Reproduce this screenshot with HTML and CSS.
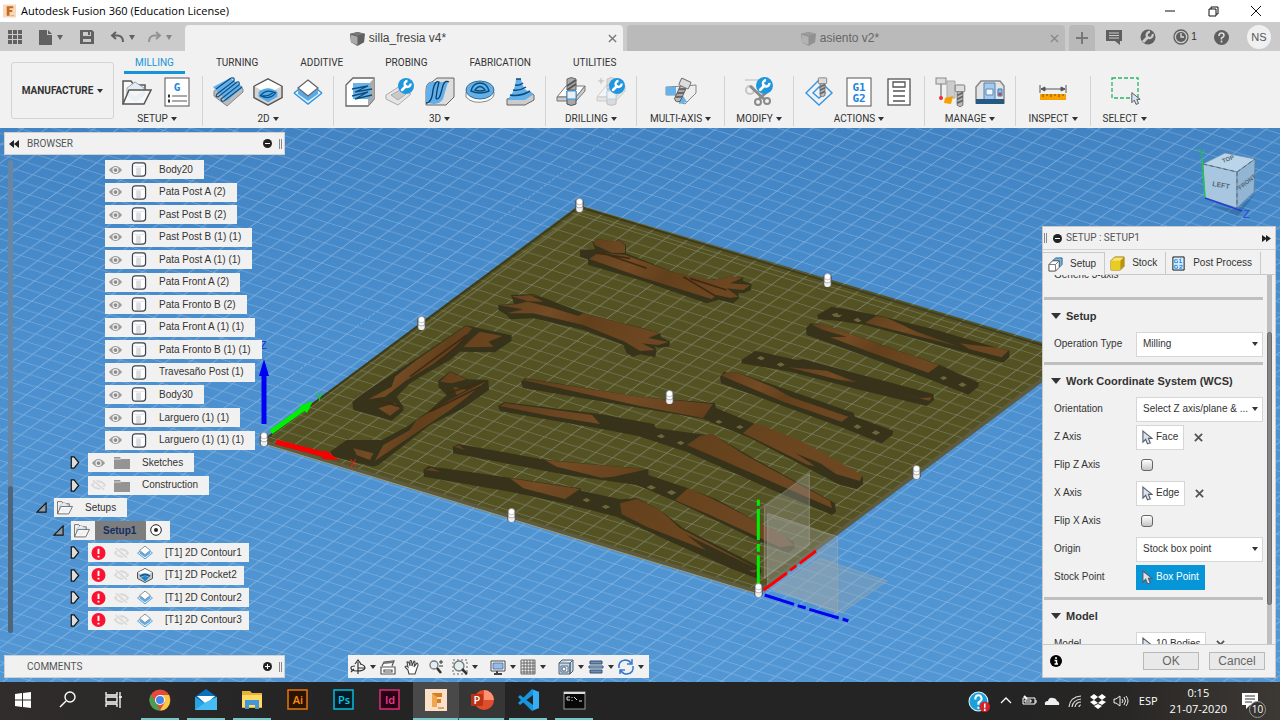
FILE: index.html
```html
<!DOCTYPE html>
<html lang="en">
<head>
<meta charset="utf-8">
<title>Autodesk Fusion 360 (Education License)</title>
<link rel="stylesheet" href="styles.css">
</head>
<body>
<svg class="defs" aria-hidden="true">
  <symbol id="eye" viewBox="0 0 16 12"><path d="M1 6Q8-2.500 15 6Q8 14.500 1 6Z" fill="#9b9b9b"/><circle cx="8" cy="6" r="3.300" fill="#f1f1f1"/><circle cx="8" cy="6" r="2" fill="#8d8d8d"/></symbol>
  <symbol id="eye-off" viewBox="0 0 16 12"><path d="M1 6Q8-2 15 6Q8 14 1 6Z" fill="none" stroke="#d9d9d9" stroke-width="2"/><circle cx="8" cy="6" r="2" fill="#d9d9d9"/><path d="M2 1L14 11" stroke="#f1f1f1" stroke-width="3"/><path d="M2 1L14 11" stroke="#d4d4d4" stroke-width="1.300"/></symbol>
  <symbol id="body" viewBox="0 0 16 16"><path d="M1 4Q1 1 4 1H12Q15 1 15 4V12Q15 15 12 15H4Q1 15 1 12Z" fill="#fff" stroke="#3c434b" stroke-width="1.300"/><path d="M1.500 4Q8 6.500 14.500 4" fill="none" stroke="#d5d8dc" stroke-width=".8"/><path d="M5 6H10V14H5Z" fill="#cfd3d8" opacity=".8"/></symbol>
  <symbol id="folder" viewBox="0 0 16 13"><path d="M0 1H6L7 3H16V13H0Z" fill="#949494"/><path d="M0 3H7" stroke="#f1f1f1" stroke-width=".8"/></symbol>
  <symbol id="setup-folder" viewBox="0 0 30 28"><path d="M1 26V3H9L12 7H23V12" fill="#f7f7f7" stroke="#555" stroke-width="1.500"/><path d="M13 4L22 10V17L13 23L5 17V10Z" fill="#e3edf6" stroke="#8b9197" stroke-width=".8"/><path d="M5 13L13 18L22 13V17L13 23L5 17Z" fill="#a9d0ee"/><path d="M1 26L7 12H29L22 26Z" fill="#f8f8f8" fill-opacity=".82" stroke="#555" stroke-width="1.500"/></symbol>
  <symbol id="contour" viewBox="0 0 30 28"><path d="M1 15L15 26L29 15" fill="none" stroke="#2f96e4" stroke-width="1.500"/><path d="M1 15L6 11M29 15L24 11" stroke="#2f96e4" stroke-width="1.500"/><path d="M5 11L15 18L25 11V16L15 23L5 16Z" fill="#58abea"/><path d="M15 2L25 10L15 18L5 10Z" fill="#fff" stroke="#666" stroke-width="1.300"/></symbol>
  <symbol id="pocket" viewBox="0 0 32 30"><path d="M16 1L31 9V21L16 29L1 21V9Z" fill="#d4d4d4" stroke="#555" stroke-width="1.500"/><path d="M16 2L30 9L16 17L2 9Z" fill="#fff"/><path d="M6 15Q16 7 26 15V20L16 26L6 20Z" fill="#57a9e8"/><path d="M8 19Q14 11 24 16Q18 24 8 19ZM10 19Q16 20 21 16" fill="none" stroke="#0b5084" stroke-width="1.400"/></symbol>
  <symbol id="pocket-small" viewBox="0 0 32 30"><path d="M16 1L31 9V21L16 29L1 21V9Z" fill="#c4c8cb" stroke="#555" stroke-width="2"/><path d="M16 2L30 9L24 12Q16 8 8 12L2 9Z" fill="#fff"/><path d="M5 15Q16 7 27 15L25 18Q16 12 7 18Z" fill="#135f98"/><path d="M8 19Q16 13 24 19L16 27Z" fill="#1f83ca"/></symbol>
  <symbol id="wrench" viewBox="0 0 16 16"><circle cx="8" cy="8" r="8" fill="#2097dd"/><path d="M4 12L8 8" stroke="#fff" stroke-width="2.500" stroke-linecap="round"/><path d="M12.500 5.500A3 3 0 1 1 9.500 3" fill="none" stroke="#fff" stroke-width="2.300"/></symbol>
  <symbol id="error" viewBox="0 0 16 16"><circle cx="8" cy="8" r="8" fill="#fa1230"/><path d="M8 3V9M8 11V13" stroke="#fff" stroke-width="2.200"/></symbol>
  <symbol id="closed" viewBox="0 0 10 14"><path d="M1 1L4 1L9 7L4 13L1 13Z" fill="#ddd" stroke="#151515" stroke-width="1.300"/></symbol>
  <symbol id="open" viewBox="0 0 12 12"><path d="M1 11L11 1V11Z" fill="#8e9aa4" stroke="#151515" stroke-width="1.300"/></symbol>
  <symbol id="cursor" viewBox="0 0 12 16"><path d="M1 1V13L4 10L6 15L9 14L7 9H11Z" fill="#dde3ec" stroke="#555d68" stroke-width="1.200"/></symbol>
  <symbol id="cube" viewBox="0 0 16 16"><path d="M0 3L8 1L16 3L15 12L8 16L1 12Z" fill="#606060"/><path d="M1 4L8 6V15L1 12Z" fill="#aaa"/><path d="M1 3L8 1L15 3L8 5Z" fill="#777"/></symbol>
  <symbol id="handle" viewBox="0 0 10 14"><rect x="1" y="1" width="8" height="12" rx="3" fill="#555"/><rect x="2" y="7" width="6" height="6" rx="2" fill="#eee"/><rect x="2" y="4" width="6" height="5" rx="2" fill="#fff" stroke="#777" stroke-width=".5"/><circle cx="5" cy="3.500" r="3" fill="#fff" stroke="#888" stroke-width=".5"/></symbol>
  <symbol id="drill" viewBox="0 0 30 30"><path d="M1 20L10 9H29L20 20Z" fill="#fff" stroke="#777"/><path d="M1 20V24H20L29 14V9L20 20Z" fill="#ccc" stroke="#777"/><path d="M11 2Q15-1 20 2V13H11Z" fill="#aaa" stroke="#666"/><path d="M11 9L20 3M11 13L20 7M11 27L20 21" stroke="#555" stroke-width="2"/><path d="M11 14H20V27Q15 30 11 27Z" fill="#a7a7a7" stroke="#555"/><path d="M11 14H20V22H11Z" fill="#eee" stroke="#2296ed"/></symbol>
  <symbol id="bolt" viewBox="0 0 12 24"><path d="M3 7H9V22L6 24L3 22Z" fill="#bbb" stroke="#555" stroke-width=".8"/><path d="M3 12L9 9M3 16L9 13M3 20L9 17" stroke="#666" stroke-width="2"/><rect x="1" y="1" width="10" height="7" rx="1" fill="#ddd" stroke="#777"/></symbol>
</svg>

<header class="titlebar">
  <svg class="logo" viewBox="0 0 14 14"><rect width="14" height="14" fill="#f7d9bd"/><path d="M4 2H11V4H7V6H10V8H7V12H4Z" fill="#c66a1d"/><path d="M8 12H12" stroke="#e9a060"/></svg>
  <h1>Autodesk Fusion 360 (Education License)</h1>
  <div class="window-buttons">
    <button aria-label="Minimize"><svg viewBox="0 0 12 12"><path d="M1 6H11" stroke="#111" fill="none"/></svg></button>
    <button aria-label="Restore"><svg viewBox="0 0 12 12"><path d="M2 4H9V11H2ZM4 4V2H11V9H9" stroke="#111" fill="none"/></svg></button>
    <button aria-label="Close"><svg viewBox="0 0 12 12"><path d="M1 1L11 11M11 1L1 11" stroke="#111" fill="none"/></svg></button>
  </div>
</header>

<div class="tabbar">
  <div class="quick">
    <button aria-label="Data panel"><svg width="14" height="14" viewBox="0 0 14 14"><path d="M0 2H14M0 7H14M0 12H14" stroke="#616161" stroke-width="4" stroke-dasharray="4 1"/></svg></button>
    <button class="has-caret" aria-label="File"><svg width="13" height="15" viewBox="0 0 13 15"><path d="M0 0H8V5H13V15H0ZM9 0L13 4H9Z" fill="#616161"/></svg></button>
    <button aria-label="Save"><svg width="14" height="14" viewBox="0 0 14 14"><path d="M0 0H12L14 2V14H0ZM3 2V6H11V2ZM3 9V12H11V9Z" fill="#616161" fill-rule="evenodd"/><path d="M8 2H10V5H8Z" fill="#616161"/></svg></button>
    <button class="has-caret" aria-label="Undo"><svg width="13" height="12" viewBox="0 0 13 12"><path d="M5 1L1 4.500L5 8M1 4.500H7Q12 5 12 11" fill="none" stroke="#616161" stroke-width="2"/></svg></button>
    <button class="has-caret faded" aria-label="Redo"><svg width="13" height="12" viewBox="0 0 13 12"><path d="M8 1L12 4.500L8 8M12 4.500H6Q1 5 1 11" fill="none" stroke="#777" stroke-width="2"/></svg></button>
  </div>
  <div class="doc doc-active"><svg class="cube"><use href="#cube"/></svg><span>silla_fresia v4*</span><button aria-label="Close silla_fresia"><svg viewBox="0 0 10 10"><path d="M1 1L9 9M9 1L1 9" stroke="#777" stroke-width="1.500"/></svg></button></div>
  <div class="doc"><svg class="cube"><use href="#cube"/></svg><span>asiento v2*</span><button aria-label="Close asiento"><svg viewBox="0 0 10 10"><path d="M1 1L9 9M9 1L1 9" stroke="#888" stroke-width="1.500"/></svg></button></div>
  <button class="new-tab" aria-label="New tab"><svg width="12" height="12" viewBox="0 0 12 12"><path d="M6 0V12M0 6H12" stroke="#777" stroke-width="2"/></svg></button>
  <div class="account">
    <button aria-label="Comments"><svg width="16" height="15" viewBox="0 0 16 15"><path d="M0 0H16V11H14V15L9 11H0Z" fill="#5f5f5f"/><path d="M3 3H13M3 5.500H13M3 8H13" stroke="#ccc"/></svg></button>
    <button aria-label="Extensions"><svg width="16" height="16" viewBox="0 0 16 16"><circle cx="8" cy="8" r="7.500" fill="#5f5f5f"/><path d="M3 13L8 8" stroke="#ccc" stroke-width="3"/><path d="M12.500 5A3 3 0 1 1 10 3" fill="none" stroke="#ccc" stroke-width="2.300"/></svg></button>
    <button class="jobs" aria-label="Job status"><svg width="16" height="16" viewBox="0 0 16 16"><circle cx="8" cy="8" r="7" fill="none" stroke="#5f5f5f" stroke-width="1.300"/><circle cx="8" cy="8" r="5" fill="#5f5f5f"/><path d="M8 4V8H11" fill="none" stroke="#ddd" stroke-width="1.300"/></svg><span>1</span></button>
    <button aria-label="Help"><svg width="15" height="15" viewBox="0 0 15 15"><circle cx="7.500" cy="7.500" r="7.500" fill="#5f5f5f"/><path d="M5 6Q5 3 7.500 3Q10 3 10 5.500Q10 7 7.500 8V9.500M7.500 10.500V12.500" fill="none" stroke="#ddd" stroke-width="1.600"/></svg></button>
    <button class="avatar">NS</button>
  </div>
</div>

<section class="ribbon">
  <button class="workspace">MANUFACTURE <i class="caret"></i></button>
  <div class="ribbon-main">
    <nav class="ribbon-tabs">
      <button class="current">MILLING</button><button>TURNING</button><button>ADDITIVE</button><button>PROBING</button><button>FABRICATION</button><button>UTILITIES</button>
    </nav>
    <div class="groups">
      <div class="group g-setup"><div class="tools">
        <button aria-label="New setup"><svg><use href="#setup-folder"/></svg></button>
        <button aria-label="NC program"><svg viewBox="0 0 30 30"><rect x="3" y="1" width="24" height="28" fill="#fff" stroke="#555"/><text x="15" y="14" class="code">G</text><path d="M10 19H25M10 24H25" stroke="#555"/><path d="M6 19H8M6 24H8" stroke="#333" stroke-width="3"/></svg></button>
      </div><button class="group-label">SETUP <i class="caret"></i></button></div>
      <div class="group g-three"><div class="tools">
        <button aria-label="Face"><svg viewBox="0 0 30 30"><path d="M1 19L14 29L30 15V12L17 2L1 14Z" fill="#bcbcbc" stroke="#888"/><path d="M0 10L17 1L30 10L14 24Z" fill="#65b0ea"/><path d="M3 12L18 1Q22 0 21 4L4 17Q2 20 5 20L24 5Q27 4 26 8L8 22Q8 25 11 24L29 10" fill="none" stroke="#094d80" stroke-width="1.200"/></svg></button>
        <button aria-label="2D pocket"><svg><use href="#pocket"/></svg></button>
        <button aria-label="2D contour"><svg><use href="#contour"/></svg></button>
      </div><button class="group-label">2D <i class="caret"></i></button></div>
      <div class="group g-five"><div class="tools">
        <button aria-label="Adaptive"><svg viewBox="0 0 30 30"><path d="M1 8L8 1H29V22L23 29H1Z" fill="#fff" stroke="#666" stroke-width="1.300"/><path d="M23 8L29 1V22L23 29Z" fill="#aaa"/><path d="M8 6H25V22H8Z" fill="#69b2ea"/><path d="M7 12L23 9L10 15L27 12M7 19L23 15L10 22L27 18" fill="none" stroke="#0b4d7e" stroke-width="1.300"/></svg></button>
        <button aria-label="Pocket"><svg viewBox="0 0 30 30"><path d="M1 18L15 9L26 17L13 28L1 22Z" fill="#e6e6e6" stroke="#aaa"/><path d="M6 18L15 13L21 17L13 23Z" fill="#c9c9c9" stroke="#aaa"/><use href="#wrench" x="13" y="1" width="16" height="16"/></svg></button>
        <button aria-label="Parallel"><svg viewBox="0 0 30 30"><path d="M1 27V14Q1 5 7 5L12 1H29V20L21 28H1Z" fill="#ddd" stroke="#666"/><path d="M1 25V13Q2 5 7 5H23L18 22Q13 30 1 25Z" fill="#63afe9"/><path d="M1 26Q7 26 8 13Q10 3 14 5Q12 12 11 21Q14 25 17 12Q19 2 24 5" fill="none" stroke="#083f6b" stroke-width="1.300"/></svg></button>
        <button aria-label="Contour"><svg viewBox="0 0 30 30"><path d="M1 15V20Q8 28 22 24Q30 21 29 15Z" fill="#fff" stroke="#888"/><ellipse cx="15" cy="13" rx="14" ry="9" fill="#63b0e8" stroke="#386b91"/><path d="M6 14Q8 6 15 6T24 14Q15 18 6 14ZM10 13Q15 6 20 13Q15 15 10 13Z" fill="none" stroke="#0c4c7d" stroke-width="1.400"/></svg></button>
        <button aria-label="Steep"><svg viewBox="0 0 30 30"><path d="M2 22L25 15L29 18V23L20 28H2Z" fill="#ccc" stroke="#666"/><path d="M11 2H16Q17 14 29 17L20 23H2Q10 16 11 2Z" fill="#61b0ea"/><path d="M11 2H16M10 8Q15 9 18 6M8 13Q15 14 21 10M5 18Q15 20 25 14" fill="none" stroke="#0b4b7c" stroke-width="1.500"/></svg></button>
      </div><button class="group-label">3D <i class="caret"></i></button></div>
      <div class="group g-two"><div class="tools">
        <button aria-label="Drill"><svg><use href="#drill"/></svg></button>
        <button aria-label="Hole recognition"><svg viewBox="0 0 30 30"><use href="#drill" width="30" height="30" opacity=".3"/><path d="M5 1V7M2 4H8" stroke="#bbb"/><use href="#wrench" x="13" y="1" width="16" height="16"/></svg></button>
      </div><button class="group-label">DRILLING <i class="caret"></i></button></div>
      <div class="group g-multi"><div class="tools">
        <button aria-label="Multi-axis"><svg viewBox="0 0 30 30"><path d="M0 10L19 9L30 8V16L19 27L13 25L10 18H0Z" fill="#eee" stroke="#888"/><path d="M0 10H10V18H0ZM14 14L21 25L13 27Z" fill="#65b3ee"/><g transform="rotate(25 15 15)"><use href="#bolt" x="8" y="1" width="14" height="25"/></g></svg></button>
      </div><button class="group-label">MULTI-AXIS <i class="caret"></i></button></div>
      <div class="group g-modify"><div class="tools">
        <button aria-label="Modify"><svg viewBox="0 0 30 30"><path d="M1 3H15" stroke="#bbb"/><circle cx="6" cy="13" r="4" fill="none" stroke="#c5c5c5" stroke-width="2"/><path d="M6 9L21 23M26 12L15 22" stroke="#8b8b8b" stroke-width="3"/><circle cx="14" cy="25" r="3" fill="none" stroke="#8b8b8b" stroke-width="2"/><circle cx="23" cy="24" r="3" fill="none" stroke="#8b8b8b" stroke-width="2"/><use href="#wrench" x="12" y="0" width="17" height="17"/></svg></button>
      </div><button class="group-label">MODIFY <i class="caret"></i></button></div>
      <div class="group g-three"><div class="tools">
        <button aria-label="Simulate"><svg viewBox="0 0 30 30"><path d="M15 3L28 16L15 28L2 16ZM15 10L21 16L15 21L9 16Z" fill="none" stroke="#3496e3" stroke-width="1.400"/><use href="#bolt" x="13" y="0" width="11" height="20"/></svg></button>
        <button aria-label="Post process"><svg viewBox="0 0 30 30"><rect x="3" y="1" width="24" height="28" fill="#fff" stroke="#555"/><text x="15" y="14" class="code">G1</text><text x="15" y="25" class="code">G2</text></svg></button>
        <button aria-label="Setup sheet"><svg viewBox="0 0 30 30"><rect x="4" y="2" width="22" height="26" fill="#fff" stroke="#555" stroke-width="1.300"/><path d="M9 5H21V10H9ZM9 14H21M9 19H21M9 24H21" fill="none" stroke="#555" stroke-width="1.300"/></svg></button>
      </div><button class="group-label">ACTIONS <i class="caret"></i></button></div>
      <div class="group g-two"><div class="tools">
        <button aria-label="Tool library"><svg viewBox="0 0 30 30"><path d="M6 6V20" stroke="#555"/><rect x="1" y="1" width="10" height="6" fill="#ddd" stroke="#888"/><circle cx="6" cy="21" r="2" fill="#f02a32"/><path d="M12 4H20V21H12Z" fill="#ccc" stroke="#aaa"/><path d="M10 21L18 19L16 27L9 26Z" fill="#f5a000"/><use href="#bolt" x="19" y="7" width="12" height="23"/></svg></button>
        <button aria-label="Machine library"><svg viewBox="0 0 30 30"><path d="M1 26V10L6 4H25L29 9V26Z" fill="#e4e4e4" stroke="#888" stroke-width="1.500"/><path d="M9 6H20V26H9Z" fill="#a5c9ef" stroke="#4e83b8"/><path d="M11 12H18V18H11Z" fill="#eef7ff" stroke="#6389ac"/><path d="M23 12H27V19H23Z" fill="#7fc0f7" stroke="#347cae"/><circle cx="25" cy="17" r="1.500" fill="#db3042"/><path d="M1 22H29V27H1Z" fill="#245981"/></svg></button>
      </div><button class="group-label">MANAGE <i class="caret"></i></button></div>
      <div class="group g-inspect"><div class="tools">
        <button aria-label="Measure"><svg viewBox="0 0 30 30"><path d="M2 8V16M28 8V16M3 12H27M3 12L7 10V14ZM27 12L23 10V14Z" fill="#555" stroke="#555"/><path d="M2 17H28V23H2Z" fill="#f8a100"/><path d="M5 17V20M9 17V19M13 17V20M17 17V19M21 17V20M25 17V19" stroke="#765007"/></svg></button>
      </div><button class="group-label">INSPECT <i class="caret"></i></button></div>
      <div class="group g-select"><div class="tools">
        <button aria-label="Select"><svg viewBox="0 0 30 30"><rect x="2" y="1" width="26" height="20" fill="none" stroke="#29b466" stroke-width="1.300" stroke-dasharray="4 2"/><use href="#cursor" x="21" y="13" width="10" height="17"/></svg></button>
      </div><button class="group-label">SELECT <i class="caret"></i></button></div>
    </div>
  </div>
</section>

<main class="viewport">
  <svg class="scene" viewBox="0 128 1280 554" preserveAspectRatio="xMidYMid slice" aria-hidden="true">
    <defs>
      <linearGradient id="sky" x1="0" y1="0" x2="0" y2="1"><stop offset="0" stop-color="#4284c3"/><stop offset=".4" stop-color="#4b8fce"/><stop offset="1" stop-color="#5297d4"/></linearGradient>
      <pattern id="grid" width="100" height="100" patternUnits="userSpaceOnUse" patternTransform="matrix(1.700 .520 1 -.750 264 441)">
        <path d="M0 5H100M0 15H100M0 25H100M0 35H100M0 45H100M0 55H100M0 65H100M0 75H100M0 85H100M0 95H100M5 0V100M15 0V100M25 0V100M35 0V100M45 0V100M55 0V100M65 0V100M75 0V100M85 0V100M95 0V100" stroke="#d5eaff" stroke-opacity=".36" stroke-width=".6"/>
      </pattern>
      <linearGradient id="wood" x1="0" y1="0" x2="1" y2=".3"><stop offset="0" stop-color="#61401d"/><stop offset=".35" stop-color="#734b25"/><stop offset=".6" stop-color="#63401c"/><stop offset="1" stop-color="#6d4721"/></linearGradient>
    </defs>
    <rect y="128" width="1280" height="554" fill="url(#sky)"/>
    <rect y="128" width="1280" height="554" fill="url(#grid)"/>
    <path d="M264 439L579 205L1074 352L1074 358L758 594L264 442Z" fill="#545223"/>
    <path d="M264 439L579 205L1074 352V358L758 594L264 442Z" fill="url(#grid)" opacity=".8"/>
    <path d="M264 440L579 207L1074 355" fill="none" stroke="#33341b" stroke-width="2" opacity=".75"/>
    <path d="M272 436L579 212L1060 355" fill="none" stroke="#8b8966" stroke-width="1" opacity=".5"/>
    <path d="M264 442L758 592L1074 356" fill="none" stroke="#5d5c43" stroke-width="4"/>
    <path d="M264 444L758 594" stroke="#a29d72"/>

    <g transform="translate(250 190) scale(.333333)">
      <path class="dark" d="M990 180L1035 178L1027 155L1045 147L1090 155L1105 148L1128 165V190L1280 250L1380 270L1440 260L1480 262L1478 272L1505 282L1503 300L1480 310L1465 308L1467 325L1450 340L1405 330L1370 340L1170 270L1015 225L1013 208L990 200Z"/>
      <path class="face" d="M1030 154L1045 147L1090 155L1105 150L1125 165V188L1085 188L1035 165ZM1018 207L1045 188L1125 195L1280 250L1385 270L1440 260L1478 263L1440 280L1500 285L1480 300L1430 295L1465 320L1440 323L1400 315L1385 327L1170 260Z"/>
      <path class="grain" d="M1035 188L1140 205M1060 190L1190 235M1300 260L1400 320M1320 265L1430 300"/>
      <path class="dark" d="M745 345L792 341L783 315L850 312L1000 370L1170 412L1232 430V440L1260 455L1258 470L1225 474L1215 467L1220 485L1215 502L1170 493L1150 500L1130 490L1120 465L1000 420L850 385L780 388L770 375L745 360Z"/>
      <path class="face" d="M785 319L850 315L1000 370L1170 413L1230 430L1195 444L1255 456L1225 465L1175 460L1215 480L1170 483L1125 455L1000 405L850 370L770 370L820 358L750 346L800 343L835 334Z"/>
      <path class="dark" d="M840 315L875 321L1000 370L985 378L900 352L825 333L880 335Z"/>
      <path class="dark" d="M648 406L785 436V452L735 487L630 485L600 510L530 550L480 580L440 620L460 650V662L425 692L385 680L310 660L307 635L340 610L430 550L500 505Z"/>
      <path class="face" d="M648 408L667 415L640 445L610 478L545 525L470 570L405 620L355 628L425 590L435 560L500 510ZM670 442L690 425L757 438L715 455L730 470L640 472ZM385 655L435 640L450 655L420 677Z"/>
      <path class="grain" d="M650 435L480 560M655 440L560 520M380 630L450 650"/>
      <path class="dark" d="M600 544L655 568L715 570L717 600L640 655L540 705L470 760L385 825L370 830L250 800L240 785L290 750L395 750L470 710L540 660L590 615L565 590V572Z"/>
      <path class="face" d="M600 546L650 568L605 580L570 575ZM708 574L640 630L600 660L540 700L375 812L400 765L480 720L500 690L600 630ZM310 775L370 790L360 810L320 795ZM610 590L650 600L620 615Z"/>
      <path class="grain" d="M700 575L590 610M690 590L540 665"/>
    </g>

    <g transform="translate(640 220) scale(.333333)">
      <path class="dark" d="M532 285L575 260L620 268L720 287L1108 392V412L1090 428L1050 418L675 315L590 302L535 298Z"/>
      <path class="face" d="M675 308L710 287L870 325L1105 392L1085 412L880 360Z"/>
      <path class="dark" d="M740 293L870 325L1070 383L1000 375L960 370L1000 395L900 360L830 335Z"/>
      <path class="dark" d="M498 325L512 310L545 312L900 435L1017 488L1015 500L985 524L860 475L500 345Z"/>
      <path class="face" d="M515 314L545 312L897 435L865 458L700 400L570 352L620 350L550 330Z"/>
      <path class="dark" d="M304 420L345 392L470 420L490 418L880 522L882 540L860 558L640 505L450 455L305 430Z"/>
      <path class="face" d="M445 442L560 452L650 487L600 480ZM770 518L868 542L875 532L840 535Z"/>
      <path class="dark" d="M240 470L252 456L290 457L640 578L645 590L760 632L757 645L725 670L600 620L243 490Z"/>
      <path class="face" d="M245 467L260 456L290 457L400 502L450 530L625 590L605 605L430 545Z"/>
      <path class="hole" d="M575 283L592 278L595 285L607 284L598 292L582 290ZM640 300L652 294L664 302L655 307ZM900 474L912 468L922 475L910 480ZM955 494L967 487L980 495L967 501ZM350 414L362 408L375 415L364 421ZM410 433L423 427L435 435L420 440ZM640 620L652 613L665 621L652 627ZM695 638L707 631L721 638L708 645Z"/>
    </g>

    <path class="dark" d="M521 382L525 378L640 397L715 403L716 408L750 422L800 442L863 477V484L857 489L840 485L750 438L703 419L640 408L523 388Z"/>
    <path class="face" d="M523 380L527 379L640 397L713 404L703 418L640 406ZM743 433L755 423L800 440L862 475L860 481L836 474L820 463L795 453L815 466L808 465Z"/>
    <path class="dark" d="M498 406L504 402L600 414L654 424L656 428L706 435L712 434L753 458L835 503L836 512L832 515L777 492L687 452L638 436L607 430L500 411Z"/>
    <path class="face" d="M500 406L505 403L592 415L600 424L550 416ZM687 445L700 436L712 434L745 455L830 501L832 508L777 484Z"/>

    <g transform="translate(400 420) scale(.333333)">
      <path class="dark" d="M158 80L175 72L440 120L745 148V165L860 203L950 238L1180 365L1185 385L1165 398L1080 365L830 245L710 195L500 165L160 100Z"/>
      <path class="face" d="M162 80L178 75L195 90ZM435 121L740 148L640 170L605 173L470 140ZM825 240L865 204L940 238L1150 345L1182 376L1140 382L1050 340L930 285Z"/>
      <path class="dark" d="M70 150L85 138L340 175L540 205L545 212L660 238L710 235L780 270L850 325L1080 440L1085 455L1070 475L990 445L800 360L650 290L490 250L330 215L72 170Z"/>
      <path class="face" d="M75 150L95 143L120 155ZM330 175L540 207L495 237L370 205ZM660 250L710 237L780 270L840 325L1080 450L1060 458L930 395L740 320L665 282Z"/>
      <path class="dark" d="M860 345L1075 448L1045 452L930 400Z"/>
      <path class="hole" d="M770 48L785 42L795 50L783 55ZM830 68L842 62L854 69L842 75ZM740 202L753 195L768 203L754 209ZM800 217L815 210L829 218L815 225ZM547 240L560 234L571 241L560 247ZM605 260L617 254L631 261L617 267ZM945 5L957 0L968 7L956 11ZM1008 21L1020 15L1031 22L1019 27Z"/>
      <path class="plane" d="M1093 260L1228 160V375L1093 475Z"/><path class="plane" d="M1103 280L1313 350V580L1103 500Z"/><path class="plane" d="M1120 510L1260 415L1462 483L1325 578Z"/>
      <g fill="none" stroke-width="9"><path d="M1075 502V406M1075 395V372M1075 361V267M1075 257V239" stroke="#00f000"/><path d="M1090 511L1161 459M1170 451L1189 437M1199 430L1248 393" stroke="#fa0000"/><path d="M1094 525L1182 553M1193 557L1217 564M1228 568L1316 594M1328 597L1345 603" stroke="#0000f5"/></g>
    </g>
    <g fill="none" stroke-width="5"><path d="M264 424V375" stroke="#0000f5"/><path d="M271 432L306 407" stroke="#00f000"/><path d="M276 442L330 456" stroke="#f80000"/></g>
    <path d="M264 359L269 376H259Z" fill="#0000f5"/><path d="M313 401L307 413L299 406Z" fill="#00f000"/><path d="M339 460L322 459L325 450Z" fill="#f80000"/>
    <g class="axis-name"><text x="260" y="349" fill="#1730d6">Z</text><text x="316" y="401" fill="#00d914">Y</text><text x="349" y="467" fill="#d71d16">X</text></g>
    <g><use href="#handle" x="574" y="198" width="11" height="15"/><use href="#handle" x="416" y="316" width="11" height="15"/><use href="#handle" x="822" y="273" width="11" height="15"/><use href="#handle" x="664" y="390" width="11" height="15"/><use href="#handle" x="911" y="465" width="11" height="15"/><use href="#handle" x="506" y="508" width="11" height="15"/><use href="#handle" x="753" y="583" width="11" height="15"/><use href="#handle" x="258" y="432" width="12" height="15"/></g>
    <g stroke-linejoin="round">
      <path d="M1210 205L1237 210L1256 193L1253 197L1238 216Z" fill="#285a85" opacity=".45"/>
      <path d="M1203 164L1225 153L1255 159L1237 172Z" fill="#bad4e9" stroke="#718da4" stroke-width=".7"/><path d="M1203 164L1237 172V208L1205 198Z" fill="#a8c6df" stroke="#6f8498" stroke-width=".7"/><path d="M1237 172L1255 159L1254 192L1237 208Z" fill="#91b5d3" stroke="#687f92" stroke-width=".7"/>
      <path d="M1203 164L1237 172V208M1237 172L1255 159" fill="none" stroke="#52687a" stroke-dasharray="4 3"/>
      <path d="M1202 158L1205 198" stroke="#20c849" stroke-width="1.500"/><path d="M1205 198L1242 211" stroke="#263ed0" stroke-width="1.500"/>
      <text class="cube-name" x="1212" y="186" transform="rotate(10 1212 186)">LEFT</text><text class="cube-name front" x="1240" y="190" transform="rotate(-38 1240 190)">FRONT</text><text class="cube-name front" x="1223" y="163" transform="rotate(-20 1223 163)">TOP</text>
      <text class="axis-name" x="1198" y="157" fill="#26b955">Y</text><text class="axis-name" x="1243" y="218" fill="#2848db">Z</text>
    </g>
  </svg>

  <aside class="left">
    <div class="panel-bar"><svg width="10" height="8" viewBox="0 0 10 8"><path d="M0 4L5 0V8ZM5 4L10 0V8Z" fill="#222"/></svg><h2>BROWSER</h2><button aria-label="Collapse browser"><svg width="9" height="9" viewBox="0 0 9 9"><circle cx="4.500" cy="4.500" r="4.500" fill="#222"/><path d="M2 4.500H7" stroke="#fff"/></svg></button><i class="grip"></i></div>
    <div class="tree-area">
      <div class="tree-scroll"><i></i></div>
      <ul class="tree">
        <li class="l4"><span><svg class="i-eye"><use href="#eye"/></svg><svg class="i-main"><use href="#body"/></svg>Body20</span></li>
        <li class="l4"><span><svg class="i-eye"><use href="#eye"/></svg><svg class="i-main"><use href="#body"/></svg>Pata Post A (2)</span></li>
        <li class="l4"><span><svg class="i-eye"><use href="#eye"/></svg><svg class="i-main"><use href="#body"/></svg>Past Post B (2)</span></li>
        <li class="l4"><span><svg class="i-eye"><use href="#eye"/></svg><svg class="i-main"><use href="#body"/></svg>Past Post B (1) (1)</span></li>
        <li class="l4"><span><svg class="i-eye"><use href="#eye"/></svg><svg class="i-main"><use href="#body"/></svg>Pata Post A (1) (1)</span></li>
        <li class="l4"><span><svg class="i-eye"><use href="#eye"/></svg><svg class="i-main"><use href="#body"/></svg>Pata Front A (2)</span></li>
        <li class="l4"><span><svg class="i-eye"><use href="#eye"/></svg><svg class="i-main"><use href="#body"/></svg>Pata Fronto B (2)</span></li>
        <li class="l4"><span><svg class="i-eye"><use href="#eye"/></svg><svg class="i-main"><use href="#body"/></svg>Pata Front A (1) (1)</span></li>
        <li class="l4"><span><svg class="i-eye"><use href="#eye"/></svg><svg class="i-main"><use href="#body"/></svg>Pata Fronto B (1) (1)</span></li>
        <li class="l4"><span><svg class="i-eye"><use href="#eye"/></svg><svg class="i-main"><use href="#body"/></svg>Travesaño Post (1)</span></li>
        <li class="l4"><span><svg class="i-eye"><use href="#eye"/></svg><svg class="i-main"><use href="#body"/></svg>Body30</span></li>
        <li class="l4"><span><svg class="i-eye"><use href="#eye"/></svg><svg class="i-main"><use href="#body"/></svg>Larguero (1) (1)</span></li>
        <li class="l4"><span><svg class="i-eye"><use href="#eye"/></svg><svg class="i-main"><use href="#body"/></svg>Larguero (1) (1) (1)</span></li>
        <li class="l3"><svg class="arrow"><use href="#closed"/></svg><span><svg class="i-eye"><use href="#eye"/></svg><svg class="i-main"><use href="#folder"/></svg>Sketches</span></li>
        <li class="l3"><svg class="arrow"><use href="#closed"/></svg><span><svg class="i-eye"><use href="#eye-off"/></svg><svg class="i-main"><use href="#folder"/></svg>Construction</span></li>
        <li class="l1"><svg class="arrow"><use href="#open"/></svg><span><svg class="i-main"><use href="#setup-folder"/></svg>Setups</span></li>
        <li class="l2"><svg class="arrow"><use href="#open"/></svg><span class="selected"><svg class="i-main"><use href="#setup-folder"/></svg><b>Setup1</b><svg class="i-radio" viewBox="0 0 12 12"><circle cx="6" cy="6" r="5.300" fill="#fff" stroke="#222"/><circle cx="6" cy="6" r="2" fill="#222"/></svg></span></li>
        <li class="l3 op"><svg class="arrow"><use href="#closed"/></svg><span><svg class="i-eye"><use href="#error"/></svg><svg class="i-eye"><use href="#eye-off"/></svg><svg class="i-main"><use href="#contour"/></svg>[T1] 2D Contour1</span></li>
        <li class="l3 op"><svg class="arrow"><use href="#closed"/></svg><span><svg class="i-eye"><use href="#error"/></svg><svg class="i-eye"><use href="#eye-off"/></svg><svg class="i-main"><use href="#pocket-small"/></svg>[T1] 2D Pocket2</span></li>
        <li class="l3 op"><svg class="arrow"><use href="#closed"/></svg><span><svg class="i-eye"><use href="#error"/></svg><svg class="i-eye"><use href="#eye-off"/></svg><svg class="i-main"><use href="#contour"/></svg>[T1] 2D Contour2</span></li>
        <li class="l3 op"><svg class="arrow"><use href="#closed"/></svg><span><svg class="i-eye"><use href="#error"/></svg><svg class="i-eye"><use href="#eye-off"/></svg><svg class="i-main"><use href="#contour"/></svg>[T1] 2D Contour3</span></li>
      </ul>
    </div>
    <div class="panel-bar comments"><h2>COMMENTS</h2><button aria-label="Add comment"><svg width="9" height="9" viewBox="0 0 9 9"><circle cx="4.500" cy="4.500" r="4.500" fill="#222"/><path d="M2 4.500H7M4.500 2V7" stroke="#fff"/></svg></button><i class="grip"></i></div>
  </aside>

  <nav class="navbar">
    <button aria-label="Orbit"><svg viewBox="0 0 16 16"><path d="M8 15V3M5 5L8 1L11 5M10 5Q15 6 15 9Q14 12 7 12Q1 12 1 9Q1 7 5 7M4 10L1 13M8 9L15 9" fill="none" stroke="#333" stroke-width="1.200"/></svg></button><i class="caret"></i>
    <button aria-label="Look at"><svg viewBox="0 0 16 16"><path d="M1 8H15V15H1ZM2 7L4 3L14 2L12 7M4 11H12V13H4Z" fill="#fff" stroke="#555" stroke-width="1.200"/><path d="M4 4L13 3" stroke="#777" stroke-width="2"/></svg></button>
    <button aria-label="Pan"><svg viewBox="0 0 16 16"><path d="M5 15L4 11L1 8Q2 6 4 8L3 3Q5 2 6 7V2Q8 0 8 7L10 2Q12 2 10 8L13 4Q15 5 13 9L11 15Z" fill="#fff" stroke="#444" stroke-width="1.100"/></svg></button>
    <button aria-label="Zoom"><svg viewBox="0 0 16 16"><circle cx="6" cy="6" r="4" fill="#e2eef7" stroke="#777" stroke-width="1.300"/><path d="M9 9L13 14" stroke="#333" stroke-width="2.500"/><path d="M13 1V5M11 3H15M11 7H15" stroke="#333"/></svg></button>
    <button aria-label="Fit"><svg viewBox="0 0 16 16"><path d="M1 1H15V15H1Z" fill="none" stroke="#666" stroke-dasharray="2 2"/><circle cx="7" cy="7" r="5" fill="#e1eef0" stroke="#777" stroke-width="1.300"/><path d="M10 10L15 15" stroke="#333" stroke-width="2.500"/></svg></button><i class="caret"></i>
    <button class="apart" aria-label="Display"><svg viewBox="0 0 16 16"><path d="M1 2H15V12H1Z" fill="#fff" stroke="#444"/><path d="M3 4H13V10H3Z" fill="#98bbe4" stroke="#5879a9"/><path d="M7 12V14M4 15H12" stroke="#444" stroke-width="2"/></svg></button><i class="caret"></i>
    <button aria-label="Grid"><svg viewBox="0 0 16 16"><path d="M1 1H15V15H1ZM1 4H15M1 7H15M1 10H15M1 13H15M4 1V15M7 1V15M10 1V15M13 1V15" fill="none" stroke="#666"/></svg></button><i class="caret"></i>
    <button class="apart" aria-label="Viewports"><svg viewBox="0 0 16 16"><path d="M1 4H12V15H1ZM1 4L4 1H15V12L12 15V4L15 1" fill="#c8dbed" stroke="#4b5f72"/><path d="M3 7H10V13H3Z" fill="#fff" stroke="#52677b"/><circle cx="6" cy="10" r="2" fill="none" stroke="#416488"/></svg></button><i class="caret"></i>
    <button aria-label="Visual style"><svg viewBox="0 0 16 16"><path d="M2 2H14V5H2ZM2 11H14V14H2Z" fill="#688db9" stroke="#344f70"/><path d="M1 7H15V9H1Z" fill="#a9c7e8" stroke="#344f70"/></svg></button><i class="caret"></i>
    <button aria-label="Refresh"><svg viewBox="0 0 16 16"><path d="M1 9Q0 2 7 1Q11 1 13 4M9 5H14V0M15 7Q16 14 9 15Q5 15 3 12M7 11H2V15" fill="none" stroke="#3479cf" stroke-width="1.500"/></svg></button><i class="caret"></i>
  </nav>

  <form class="dialog">
    <header><i class="grip"></i><svg width="9" height="9" viewBox="0 0 9 9"><circle cx="4.500" cy="4.500" r="4.500" fill="#222"/><path d="M2 4.500H7" stroke="#fff"/></svg><h2>SETUP : SETUP1</h2><svg width="9" height="7" viewBox="0 0 9 7"><path d="M0 0L5 3.500L0 7ZM4 0L9 3.500L4 7Z" fill="#222"/></svg></header>
    <div class="dialog-tabs">
      <button type="button" class="on"><svg viewBox="0 0 16 16"><path d="M5 4L8 1H15V8L12 11" fill="#79b7e4" stroke="#255d91"/><path d="M1 8L5 4H12V11L8 15H1Z" fill="#fff" stroke="#444"/><path d="M1 8H8V15M8 8L12 4" fill="none" stroke="#777"/></svg>Setup</button>
      <button type="button"><svg viewBox="0 0 16 16"><path d="M1 5L5 1H15V11L11 15H1Z" fill="#f9e46f" stroke="#a97d10"/><path d="M1 5H11V15H1Z" fill="#e7cc24"/><path d="M11 5L15 1V11L11 15Z" fill="#ba920e"/></svg>Stock</button>
      <button type="button"><svg viewBox="0 0 16 16"><path d="M2 1H14V15H2Z" fill="#d7edff" stroke="#111"/><path d="M4 4H7M4 4V7H7V5M10 3V7M9 4L10 3M9 7H12M4 10H7M4 10V13H7V11M9 10H12V11L9 13H12" fill="none" stroke="#238be4"/></svg>Post Process</button>
    </div>
    <div class="dialog-body">
      <div class="fields">
        <div class="row"><span>Generic 3-axis</span></div>
        <section>
          <h3><i class="caret big"></i>Setup</h3>
          <div class="row"><label for="operation">Operation Type</label><span class="select"><select id="operation"><option>Milling</option></select><i class="caret"></i></span></div>
        </section>
        <section class="wcs">
          <h3><i class="caret big"></i>Work Coordinate System (WCS)</h3>
          <div class="row"><label for="orientation">Orientation</label><span class="select"><select id="orientation"><option>Select Z axis/plane &amp; ...</option></select><i class="caret"></i></span></div>
          <div class="row"><label for="zaxis">Z Axis</label><button type="button" id="zaxis" class="pick"><svg><use href="#cursor"/></svg>Face</button><button type="button" class="clear" aria-label="Clear Z axis"><svg viewBox="0 0 10 10"><path d="M1 1L9 9M9 1L1 9" stroke="#555" stroke-width="2"/></svg></button></div>
          <div class="row"><label for="flipz">Flip Z Axis</label><input type="checkbox" id="flipz"></div>
          <div class="row"><label for="xaxis">X Axis</label><button type="button" id="xaxis" class="pick"><svg><use href="#cursor"/></svg>Edge</button><button type="button" class="clear" aria-label="Clear X axis"><svg viewBox="0 0 10 10"><path d="M1 1L9 9M9 1L1 9" stroke="#555" stroke-width="2"/></svg></button></div>
          <div class="row"><label for="flipx">Flip X Axis</label><input type="checkbox" id="flipx"></div>
          <div class="row"><label for="origin">Origin</label><span class="select"><select id="origin"><option>Stock box point</option></select><i class="caret"></i></span></div>
          <div class="row"><label for="point">Stock Point</label><button type="button" id="point" class="pick active"><svg><use href="#cursor"/></svg>Box Point</button></div>
        </section>
        <section>
          <h3><i class="caret big"></i>Model</h3>
          <div class="row"><label for="model">Model</label><button type="button" id="model" class="pick"><svg><use href="#cursor"/></svg>10 Bodies</button><button type="button" class="clear" aria-label="Clear model"><svg viewBox="0 0 10 10"><path d="M1 1L9 9M9 1L1 9" stroke="#555" stroke-width="2"/></svg></button></div>
        </section>
      </div>
      <div class="dialog-scroll"><i></i></div>
    </div>
    <footer><svg width="12" height="12" viewBox="0 0 12 12"><circle cx="6" cy="6" r="6" fill="#000"/><path d="M6 2V4M4.500 5.500H6.500V9M4.500 9H8" fill="none" stroke="#fff" stroke-width="1.500"/></svg><button type="button">OK</button><button type="button">Cancel</button></footer>
  </form>
</main>

<footer class="taskbar">
  <div class="apps">
    <button aria-label="Start"><svg viewBox="0 0 24 24"><path d="M4 6L11 5V11.500H4ZM12 5L20 4V11.500H12ZM4 12.500H11V19L4 18ZM12 12.500H20V20L12 19Z" fill="#fff"/></svg></button>
    <button aria-label="Search"><svg viewBox="0 0 24 24"><circle cx="14" cy="9" r="5" fill="none" stroke="#fff" stroke-width="1.400"/><path d="M10 13L4 19" stroke="#fff" stroke-width="1.400"/></svg></button>
    <button aria-label="Task view"><svg viewBox="0 0 24 24"><path d="M4 4V7H15V4M4 19V16H15V19M4 9H15V14H4ZM18 4V20M17 9H20" fill="none" stroke="#fff" stroke-width="1.300"/></svg></button>
    <button class="running" aria-label="Chrome"><svg viewBox="0 0 24 24"><circle cx="12" cy="12" r="10.500" fill="#e34b3d"/><path d="M3 6.500L9 16L12 22.500A10.500 10.500 0 0 1 3 6.500Z" fill="#4b9d4f"/><path d="M12 7H21Q24 15 19 20Q16 23 12 22.500L17 14Z" fill="#f7ca42"/><circle cx="12" cy="12" r="5" fill="#fff"/><circle cx="12" cy="12" r="4" fill="#4584ed"/></svg></button>
    <button class="running" aria-label="Mail"><svg viewBox="0 0 24 24"><path d="M1 9L12 1L23 9V22H1Z" fill="#0872be"/><path d="M3 8H21L12 16Z" fill="#fff"/><path d="M1 9L12 16L23 9V22H1Z" fill="#28a3e4"/><path d="M1 22L12 14L23 9V22Z" fill="#47bdf3"/></svg></button>
    <button class="running" aria-label="File Explorer"><svg viewBox="0 0 24 24"><path d="M2 3H10L12 5H22V20H2Z" fill="#e9b233"/><path d="M2 7H22V19H2Z" fill="#ffda66"/><path d="M5 12H19V21H15V17H9V21H5Z" fill="#4297d6"/></svg></button>
    <button aria-label="Illustrator"><svg viewBox="0 0 24 24"><rect x="2" y="2" width="19" height="19" fill="#291400" stroke="#e87510" stroke-width="1.500"/><text x="12" y="16" fill="#ff8b19">Ai</text></svg></button>
    <button aria-label="Photoshop"><svg viewBox="0 0 24 24"><rect x="2" y="2" width="19" height="19" fill="#001d26" stroke="#0bb9df" stroke-width="1.500"/><text x="12" y="16" fill="#16c6ea">Ps</text></svg></button>
    <button aria-label="InDesign"><svg viewBox="0 0 24 24"><rect x="2" y="2" width="19" height="19" fill="#270014" stroke="#dc2c77" stroke-width="1.500"/><text x="12" y="16" fill="#f03d8c">Id</text></svg></button>
    <button class="running focused" aria-label="Fusion 360"><svg viewBox="0 0 24 24"><rect x="1" y="1" width="22" height="22" fill="#f9e0c7"/><path d="M8 5H18V9H13V11H17V15H13V19H8Z" fill="#d77c22"/><path d="M8 5L13 9V19H8Z" fill="#f0a64f"/><path d="M14 20H20" stroke="#dda265" stroke-width="2"/></svg></button>
    <button class="running lifted" aria-label="PowerPoint"><svg viewBox="0 0 24 24"><circle cx="14" cy="12" r="10" fill="#df4d2c"/><path d="M14 2A10 10 0 0 1 24 12H14Z" fill="#ff9270"/><rect x="1" y="6" width="12" height="12" rx="1" fill="#bc3214"/><text x="7" y="16" fill="#fff">P</text></svg></button>
    <button class="running" aria-label="Visual Studio Code"><svg viewBox="0 0 24 24"><path d="M16 1L23 4V20L16 23L2 9L4 7L17 17V7L4 17L2 15Z" fill="#1795de"/><path d="M17 2L23 4V20L17 22Z" fill="#38adf1"/></svg></button>
    <button class="running" aria-label="Command prompt"><svg viewBox="0 0 24 24"><rect x="2" y="4" width="21" height="17" fill="#080808" stroke="#999"/><path d="M2 5H23" stroke="#ddd" stroke-width="2"/><path d="M5 9H8M5 9V12H8M10 9V10M10 12V13M12 9L15 12M17 13H20" fill="none" stroke="#ddd"/></svg></button>
  </div>
  <div class="tray">
    <svg viewBox="0 0 20 20" class="help"><circle cx="9" cy="10" r="9" fill="#1aa1db" stroke="#d7f2ff"/><path d="M6 8Q6 4 9 4T12 8Q11 10 9 11V13M9 15V17" fill="none" stroke="#fff" stroke-width="2"/><circle cx="15" cy="15" r="5" fill="#d3232a"/><path d="M15 12V16M15 17V19" stroke="#fff" stroke-width="1.500"/></svg>
    <svg viewBox="0 0 16 16"><path d="M3 10L8 5L13 10" fill="none" stroke="#fff" stroke-width="1.300"/></svg>
    <svg viewBox="0 0 16 16"><path d="M2 5H14V11H2ZM15 7V10M4 7V9H10V7Z" fill="none" stroke="#fff"/><path d="M3 3L6 6" stroke="#fff" stroke-width="2"/></svg>
    <svg viewBox="0 0 16 16"><path d="M1 12Q0 8 4 8Q5 4 9 5Q12 5 13 8Q16 9 15 12Z" fill="#eee"/></svg>
    <svg viewBox="0 0 16 16"><path d="M2 14Q3 4 14 3M5 14Q6 7 14 6M8 14Q9 9 14 9M12 14Q12 12 14 12" fill="none" stroke="#ddd" stroke-width="1.200"/></svg>
    <svg viewBox="0 0 16 16"><path d="M4 1L8 4L4 7L0 4ZM12 1L16 4L12 7L8 4ZM4 7L8 10L4 12L0 9ZM12 7L16 9L12 12L8 10ZM8 11L12 13L8 16L4 13Z" fill="#fff"/></svg>
    <svg viewBox="0 0 16 16"><path d="M1 6H3L7 3V13L3 10H1ZM9 6Q11 8 9 10M11 4Q14 8 11 12M13 3Q17 8 13 13" fill="none" stroke="#eee"/></svg>
    <span class="lang">ESP</span>
    <time datetime="2020-07-21T00:15">0:15<br>21-07-2020</time>
    <button class="notices" aria-label="Notifications"><svg viewBox="0 0 16 16"><path d="M0 0H16V12H8L4 16V12H0Z" fill="#fff"/><path d="M3 3H13M3 6H13M3 9H10" stroke="#333"/></svg><span>10</span></button>
  </div>
</footer>
</body>
</html>
```
FILE: styles.css
```css
* { box-sizing: border-box; }
body { margin: 0; height: 100vh; display: flex; flex-direction: column; overflow: hidden; font: 10px/14px "Liberation Sans", Arial, sans-serif; color: #333; }
button { font: inherit; color: inherit; border: 0; padding: 0; background: none; display: flex; align-items: center; justify-content: center; }
h1, h2, h3, ul { margin: 0; padding: 0; font-weight: normal; }
svg { flex: none; overflow: visible; }
.defs { position: absolute; width: 0; height: 0; }
.caret { flex: none; width: 0; height: 0; border: 3px solid transparent; border-top: 4px solid #333; border-bottom: 0; }
.caret.big { border-width: 5px; border-top-width: 6px; border-bottom: 0; }

.titlebar { flex: 0 0 22px; display: flex; align-items: center; padding-left: 3px; background: #fff; color: #000; }
.titlebar h1 { margin-left: 5px; font: 11px/20px "Open Sans", sans-serif; flex: 1; }
.logo { width: 13px; height: 14px; }
.window-buttons { display: flex; gap: 31px; padding-right: 18px; }
.window-buttons svg { width: 12px; height: 12px; }

.tabbar { flex: 0 0 29px; display: flex; align-items: stretch; padding-top: 3px; background: #cbcbcb; }
.quick { flex: 0 0 185px; display: flex; align-items: center; padding: 0 0 2px 8px; gap: 17px; }
.has-caret { gap: 5px; }
.quick .has-caret + .has-caret { margin-left: -4px; }
.has-caret::after { content: ""; border: 3px solid transparent; border-top: 5px solid #616161; border-bottom: 0; }
.faded { opacity: .65; }
.doc { flex: 1; display: flex; align-items: center; justify-content: center; gap: 4px; position: relative; margin-right: 4px; border-radius: 4px 4px 0 0; background: #bababa; color: #666; font-size: 12px; padding-right: 12px; }
.doc-active { background: #f1f1f1; color: #444; }
.doc .cube { width: 15px; height: 15px; }
.doc:not(.doc-active) .cube { opacity: .45; }
.doc button { position: absolute; right: 6px; top: 9px; }
.doc button svg { width: 9px; height: 9px; }
.new-tab { width: 26px; background: #b9b9b9; border-radius: 4px 4px 0 0; }
.account { flex: 0 0 185px; display: flex; align-items: center; justify-content: space-between; padding: 0 9px 2px 11px; }
.jobs { gap: 2px; }
.avatar { width: 24px; height: 24px; border-radius: 50%; background: #f0f0f0; font-size: 11px; color: #555; }

.ribbon { flex: 0 0 77px; display: flex; background: #f1f1f1; font-family: Roboto, sans-serif; }
.workspace { flex: 0 0 103px; height: 57px; margin: 11px 10px 0 11px; border: 1px solid #d3d3d3; border-radius: 3px; gap: 4px; font-weight: bold; }
.ribbon-main { flex: 1; display: flex; flex-direction: column; min-width: 0; }
.ribbon-tabs { flex: 0 0 23px; display: flex; gap: 20px; }
.ribbon-tabs button { padding: 0 11px; }
.ribbon-tabs .current { color: #1495d9; border-bottom: 3px solid #1495d9; padding-top: 3px; }
.groups { display: flex; flex: 1; padding: 2px 0; }
.group { border-right: 1px solid #d3d3d3; display: flex; flex-direction: column; justify-content: space-between; align-items: center; flex: none; }
.group:last-child { border: 0; }
.tools { display: flex; gap: 10px; padding-top: 1px; }
.tools svg { width: 30px; height: 30px; }
.group-label { gap: 3px; line-height: 14px; }
.g-setup { width: 79px; padding-right: 12px; }
.g-three { width: 131px; }
.g-five { width: 212px; }
.g-two { width: 91px; }
.g-multi { width: 88px; }
.g-modify { width: 69px; }
.g-inspect { width: 75px; }
.g-select { width: 67px; }
.code { font: bold 11px "DejaVu Sans Mono", monospace; fill: #1f87dc; text-anchor: middle; }

.viewport { flex: 1; position: relative; display: flex; min-height: 0; padding: 4px; background: #4b8fce; }
.scene { position: absolute; inset: 0; width: 100%; height: 100%; overflow: hidden; }
.dark { fill: #37331a; }
.face { fill: url(#wood); }
.hole { fill: #6b673b; }
.grain { stroke: #3f2b14; stroke-width: 5; fill: none; }
.plane { fill: #a5a7a4; fill-opacity: .33; stroke: #aeb0ac; stroke-opacity: .45; stroke-width: 3; }
.axis-name { font: 11px "Liberation Sans", sans-serif; }
.cube-name { font: bold 7px "Liberation Sans", sans-serif; fill: #526778; }
.cube-name.front { font-size: 6px; }

.left { flex: 0 0 281px; position: relative; display: flex; flex-direction: column; }
.panel-bar { height: 23px; display: flex; align-items: center; padding: 0 2px 0 4px; background: #f1f1f1; border: 1px solid #d0d0d0; font-family: Roboto, sans-serif; color: #555; }
.panel-bar h2, .dialog h2 { font-size: 10px; line-height: 14px; flex: 1; }
.panel-bar h2 { margin-left: 8px; }
.panel-bar.comments h2 { margin-left: 18px; }
.grip { width: 3px; height: 10px; margin-left: 7px; border: solid #888; border-width: 0 1px; }
.tree-area { flex: 1; display: flex; margin: 5px 0 22px; min-height: 0; }
.tree-scroll { width: 5px; margin-left: 4px; border-radius: 3px; background: #6987a3; display: flex; align-items: flex-end; }
.tree-scroll i { width: 5px; height: 31%; border-radius: 3px; background: #50657a; }
.tree { list-style: none; display: flex; flex-direction: column; justify-content: space-between; padding-bottom: 3px; }
.tree li { display: flex; align-items: center; height: 19px; }
.tree span { display: flex; align-items: center; height: 19px; background: #f1f1f1; padding: 0 11px 0 3px; white-space: nowrap; }
.tree .op span { padding-right: 7px; }
.l4 { padding-left: 92px; }
.l3 { padding-left: 57px; }
.l2 { padding-left: 40px; }
.l1 { padding-left: 23px; }
.arrow { width: 10px; height: 13px; margin-right: 8px; }
.l1 .arrow, .l2 .arrow { width: 11px; height: 11px; margin-right: 7px; }
.i-eye { width: 15px; height: 14px; margin-right: 8px; }
.i-main { width: 16px; height: 15px; margin-right: 12px; }
.tree .selected { padding: 0; }
.selected .i-main { margin: 0 5px 0 3px; }
.selected b { background: #7d7d7d; color: #112e63; line-height: 19px; padding: 0 10px 0 8px; font-size: 10px; }
.i-radio { width: 12px; height: 12px; margin: 0 8px 0 4px; }

.navbar { position: relative; align-self: flex-end; margin: 0 auto 0 63px; height: 23px; display: flex; align-items: center; background: #f1f1f1; padding: 0 5px 0 2px; gap: 4px; }
.navbar svg { width: 16px; height: 16px; }
.navbar button + button { margin-left: 4px; }
.navbar .apart { margin-left: 8px; }

.dialog { position: relative; flex: 0 0 234px; margin-top: 94px; display: flex; flex-direction: column; background: #f1f1f1; border: 1px solid #c9c9c9; }
.dialog header { flex: 0 0 22px; display: flex; align-items: center; gap: 4px; padding-right: 4px; font-family: Roboto, sans-serif; color: #555; }
.dialog header .grip { margin: 0 2px 0 1px; }
.dialog-tabs { flex: 0 0 26px; display: flex; border-top: 1px solid #d3d3d3; border-bottom: 1px solid #c9c9c9; padding-top: 2px; }
.dialog-tabs button { gap: 7px; padding: 0 8px 0 5px; border-right: 1px solid #c9c9c9; }
.dialog-tabs .on { margin-bottom: -1px; background: #f1f1f1; border-top: 1px solid #c9c9c9; }
.dialog-tabs svg { width: 15px; height: 15px; }
.dialog-body { flex: 1; min-height: 0; overflow: hidden; display: flex; gap: 4px; padding: 0 3px 0 1px; }
.fields { flex: 1; margin-top: -14px; }
.fields > .row { margin-bottom: 8px; }
.dialog-scroll { width: 5px; background: #bdbfc1; padding-top: 57px; }
.dialog-scroll i { display: block; width: 5px; height: 273px; border-radius: 3px; background: #858585; border: 1px solid #6c6c6c; }
.fields section { border-top: 3px solid #bfbfbf; padding: 2px 0 4px; }
.fields .wcs { padding-bottom: 6px; }
h3 { display: flex; align-items: center; height: 28px; padding-left: 7px; gap: 5px; font-weight: bold; font-size: 11px; }
.row { display: flex; align-items: center; height: 28px; padding-left: 10px; white-space: nowrap; }
.row label { flex: 0 0 82px; }
.select { position: relative; flex: 1; display: flex; }
.select .caret { position: absolute; right: 5px; top: 10px; }
select { appearance: none; width: 100%; height: 25px; margin: 0; padding: 0 6px; border: 1px solid #d6d6d6; border-radius: 0; background: #fff; font: inherit; color: inherit; }
.pick { height: 25px; gap: 3px; padding: 0 5px; border: 1px solid #d6d6d6; background: #fff; }
.pick svg { width: 11px; height: 15px; }
.pick.active { background: #0696d7; border-color: #0696d7; color: #fff; }
.clear { margin-left: 10px; }
.clear svg { width: 9px; height: 9px; }
input[type="checkbox"] { appearance: none; width: 12px; height: 12px; margin: 0 5px; border: 1px solid #666; border-radius: 3px; background: linear-gradient(#fff, #c5c5c5); }
.dialog footer { flex: 0 0 33px; display: flex; align-items: center; gap: 10px; padding: 0 10px 0 7px; border-top: 1px solid #c9c9c9; }
.dialog footer svg { margin-right: auto; }
.dialog footer button { width: 56px; height: 18px; border: 1px solid #b9b9b9; background: #e9e9e9; font-size: 12px; color: #666; }

.taskbar { flex: 0 0 38px; display: flex; justify-content: space-between; background: linear-gradient(90deg, #302d2c, #242424 25%, #242424 80%, #292725 88%, #3c3935); color: #fff; font: 11px/16px "Open Sans", sans-serif; }
.apps { display: flex; }
.apps button { width: 46px; border-bottom: 2px solid transparent; position: relative; }
.apps button:first-child { width: 45px; }
.apps svg { width: 24px; height: 24px; }
.apps text { font: 600 11px "Open Sans", sans-serif; text-anchor: middle; }
.apps .running::after { content: ""; position: absolute; left: 4px; right: 4px; bottom: -2px; height: 2px; background: #76c7c8; }
.apps .focused { background: #494949; }
.apps .lifted { background: #363636; }
.apps .focused::after, .apps .lifted::after { left: 0; right: 1px; }
.tray { display: flex; align-items: center; gap: 7px; }
.tray svg { width: 16px; height: 16px; }
.tray .help { width: 21px; height: 21px; margin-right: 1px; }
.lang { margin-left: 3px; }
time { text-align: center; margin: 0 8px 0 5px; }
.notices { position: relative; width: 38px; height: 34px; justify-content: flex-start; }
.notices span { position: absolute; left: 7px; top: 17px; width: 17px; height: 17px; line-height: 15px; border: 1px solid #999; border-radius: 50%; background: #37332f; font-size: 10px; }
```
